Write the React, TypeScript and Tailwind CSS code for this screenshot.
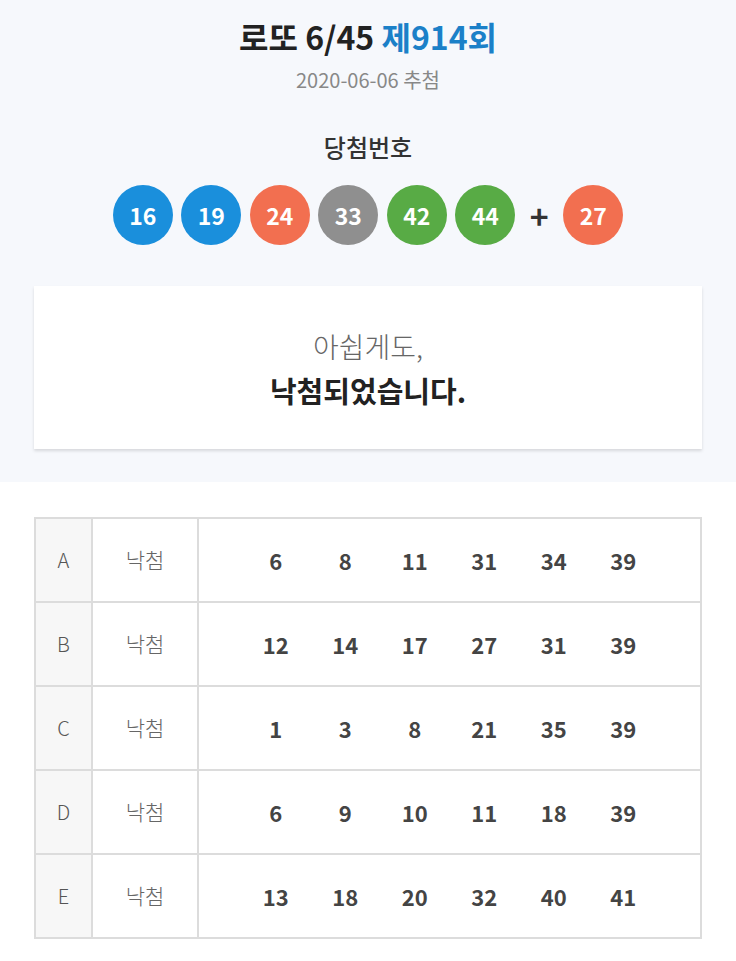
import React from 'react'

const balls = [
    { n: 16, c: 'bg-[#1a8fdc]' },
    { n: 19, c: 'bg-[#1a8fdc]' },
    { n: 24, c: 'bg-[#f26f50]' },
    { n: 33, c: 'bg-[#8f8f8f]' },
    { n: 42, c: 'bg-[#58ab45]' },
    { n: 44, c: 'bg-[#58ab45]' },
]

const rows = [
    { id: 'A', nums: [6, 8, 11, 31, 34, 39] },
    { id: 'B', nums: [12, 14, 17, 27, 31, 39] },
    { id: 'C', nums: [1, 3, 8, 21, 35, 39] },
    { id: 'D', nums: [6, 9, 10, 11, 18, 39] },
    { id: 'E', nums: [13, 18, 20, 32, 40, 41] },
]

function Ball({ n, c }: { n: number, c: string }) {
    return (
        <div className={`w-[60px] h-[60px] rounded-full flex items-center justify-center text-white text-[23px] font-bold ${c}`}>
            {n}
        </div>
    )
}

export default function App() {
    return (
        <div className="w-[736px] min-h-[961px] bg-white text-[#333]" style={{ fontFamily: '"Noto Sans CJK KR", "Noto Sans", sans-serif' }}>
            <section className="bg-[#f6f8fc] pt-[14px] pb-[33px] px-[34px] flex flex-col items-center">
                <h1 className="text-[32px] leading-[44px] font-bold text-[#222]">
                    로또 6/45 <span className="text-[#1b80c8]">제914회</span>
                </h1>
                <p className="mt-[8px] text-[20px] leading-[28px] text-[#888]">2020-06-06 추첨</p>
                <p className="mt-[37px] text-[24px] leading-[32px] font-medium text-[#333]">당첨번호</p>
                <div className="mt-[22px] flex items-center gap-[8.5px]">
                    {balls.map((b) => (
                        <Ball key={b.n} n={b.n} c={b.c} />
                    ))}
                    <div className="w-[31px] text-center text-[32px] leading-none font-bold text-[#333]">+</div>
                    <Ball n={27} c="bg-[#f26f50]" />
                </div>
                <div className="mt-[41px] w-full h-[163px] bg-white shadow-[0_2px_3px_rgba(0,0,0,0.13)] flex flex-col items-center justify-center">
                    <p className="text-[28px] leading-[38px] font-light text-[#666]">아쉽게도,</p>
                    <p className="mt-[6px] text-[29px] leading-[38px] font-bold text-[#222]">낙첨되었습니다.</p>
                </div>
            </section>
            <section className="pt-[35px] px-[34px] pb-[20px]">
                <table className="w-full border-collapse border-2 border-[#dcdcdc]">
                    <tbody>
                        {rows.map((r) => (
                            <tr key={r.id} className="h-[84px]">
                                <td className="w-[57px] border-2 border-[#dcdcdc] bg-[#f7f7f7] text-center text-[20px] font-light text-[#555]">{r.id}</td>
                                <td className="w-[106px] border-2 border-[#dcdcdc] text-center text-[21px] font-light text-[#666]">낙첨</td>
                                <td className="border-2 border-[#dcdcdc]">
                                    <div className="flex justify-center">
                                        {r.nums.map((n, i) => (
                                            <span key={i} className="w-[69.5px] text-center text-[22px] font-bold text-[#444]">{n}</span>
                                        ))}
                                    </div>
                                </td>
                            </tr>
                        ))}
                    </tbody>
                </table>
            </section>
        </div>
    )
}
